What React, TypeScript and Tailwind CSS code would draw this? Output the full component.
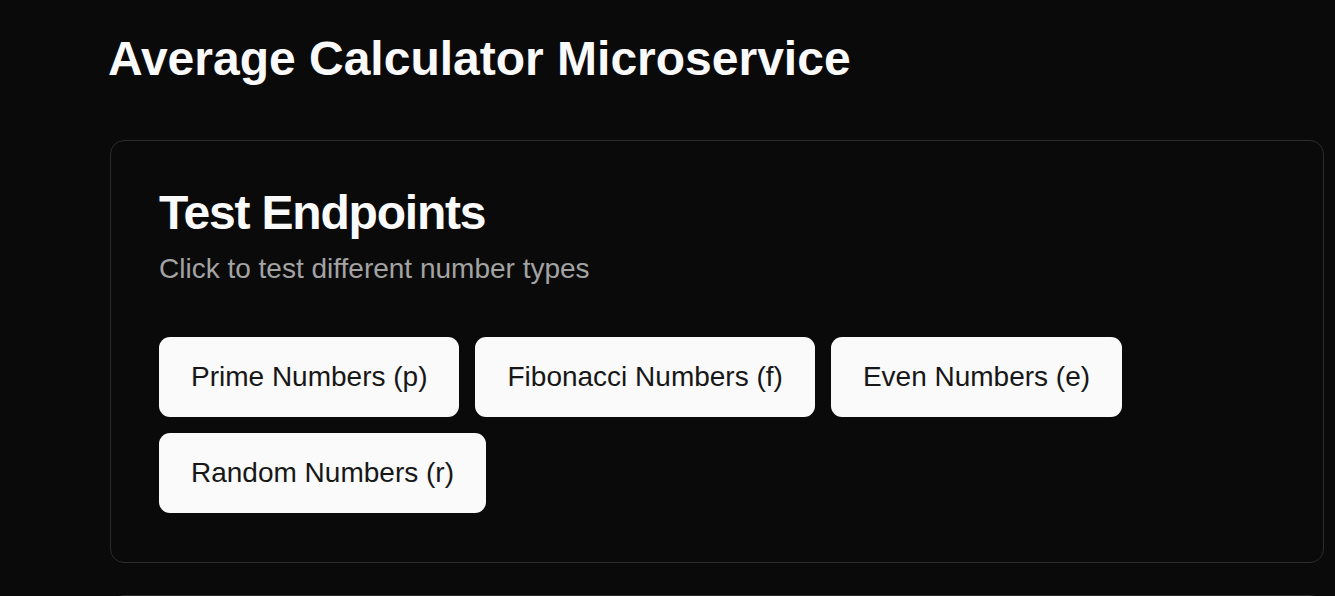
import React from "react";

const endpoints = [
  "Prime Numbers (p)",
  "Fibonacci Numbers (f)",
  "Even Numbers (e)",
  "Random Numbers (r)",
];

export default function App() {
  return (
    <div
      className="min-h-screen bg-[#0a0a0a] text-[#fafafa] overflow-hidden"
      style={{ fontFamily: '"Liberation Sans", Arial, Helvetica, sans-serif' }}
    >
      <div className="pl-[110px] pr-[11px] pt-[35px]">
        <h1 className="text-[48px] leading-[48px] font-bold mb-[57px] -ml-[2px]">
          Average Calculator Microservice
        </h1>
        <div className="flex flex-col gap-[32px]">
          <div className="rounded-[14px] border border-[#2c2c2c] bg-[#0a0a0a]">
            <div className="pt-12 px-12 pb-[48px] flex flex-col gap-[12px]">
              <h2 className="text-[48px] leading-[48px] font-bold tracking-[-1.2px]">
                Test Endpoints
              </h2>
              <p className="text-[28px] leading-[40px] text-[#a3a3a3]">
                Click to test different number types
              </p>
            </div>
            <div className="px-12 pb-[49px] flex flex-wrap gap-4">
              {endpoints.map((e) => (
                <button
                  key={e}
                  className="h-[80px] px-8 rounded-[11px] bg-[#fafafa] text-[#171717] text-[28px] leading-[40px] flex items-center"
                >
                  {e}
                </button>
              ))}
            </div>
          </div>
          <div className="rounded-[14px] border border-[#2c2c2c] bg-[#0a0a0a] h-[300px]" />
        </div>
      </div>
    </div>
  );
}
